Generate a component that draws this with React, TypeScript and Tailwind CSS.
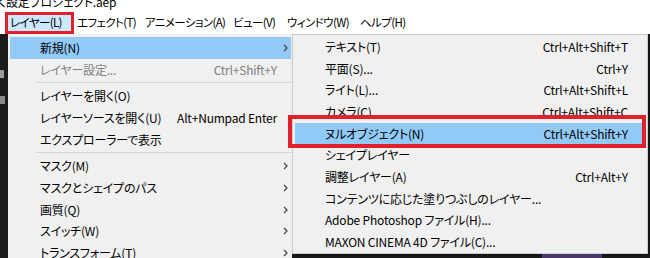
import * as React from 'react'

type Item = {
  label?: string
  shortcut?: string
  sub?: boolean
  disabled?: boolean
  active?: boolean
  sep?: boolean
}

const layerMenu: Item[] = [
  { label: '新規(N)', sub: true, active: true },
  { label: 'レイヤー設定...', shortcut: 'Ctrl+Shift+Y', disabled: true },
  { sep: true },
  { label: 'レイヤーを開く(O)' },
  { label: 'レイヤーソースを開く(U)', shortcut: 'Alt+Numpad Enter' },
  { label: 'エクスプローラーで表示' },
  { sep: true },
  { label: 'マスク(M)', sub: true },
  { label: 'マスクとシェイプのパス', sub: true },
  { label: '画質(Q)', sub: true },
  { label: 'スイッチ(W)', sub: true },
  { label: 'トランスフォーム(T)', sub: true },
]

const newMenu: Item[] = [
  { label: 'テキスト(T)', shortcut: 'Ctrl+Alt+Shift+T' },
  { label: '平面(S)...', shortcut: 'Ctrl+Y' },
  { label: 'ライト(L)...', shortcut: 'Ctrl+Alt+Shift+L' },
  { label: 'カメラ(C)...', shortcut: 'Ctrl+Alt+Shift+C' },
  { label: 'ヌルオブジェクト(N)', shortcut: 'Ctrl+Alt+Shift+Y', active: true },
  { label: 'シェイプレイヤー' },
  { label: '調整レイヤー(A)', shortcut: 'Ctrl+Alt+Y' },
  { label: 'コンテンツに応じた塗りつぶしのレイヤー...' },
  { label: 'Adobe Photoshop ファイル(H)...' },
  { label: 'MAXON CINEMA 4D ファイル(C)...' },
]

const Chevron = () => (
  <svg width="5" height="8" viewBox="0 0 5 8" className="text-[#444]">
    <path d="M1 1l3 3-3 3" stroke="currentColor" fill="none" strokeWidth="1.2" />
  </svg>
)

const App: React.FC = () => {
  return (
    <div className="relative w-[650px] h-[258px] overflow-hidden bg-white text-[12px] tracking-[-0.2px] text-black font-['Noto_Sans_CJK_JP','Noto_Sans',sans-serif] [font-feature-settings:'palt']">
      {/* title */}
      <div className="h-[12px] overflow-hidden">
        <div className="-mt-[6px] -ml-[2px] leading-[16px] whitespace-nowrap">く設定プロジェクト.aep</div>
      </div>

      {/* menu bar */}
      <div className="flex h-[22px] items-center whitespace-nowrap text-[11.5px] tracking-[-0.6px]">
        <div className="ml-[5px] flex h-[22px] w-[69px] items-center border-[3px] border-[#e0202a] bg-[#cce8ff] pl-[2px]">
          レイヤー(L)
        </div>
        <div className="ml-[3px] w-[68px]">エフェクト(T)</div>
        <div className="w-[88px]">アニメーション(A)</div>
        <div className="w-[54px]">ビュー(V)</div>
        <div className="w-[73px]">ウィンドウ(W)</div>
        <div>ヘルプ(H)</div>
      </div>

      {/* body */}
      <div className="flex h-[224px] bg-[#1c1c1c]">
        <div className="w-[8px]">
          <div className="mt-[36px] h-[8px] w-[4px] bg-[#9a9a9a]" />
          <div className="mt-[18px] h-[8px] w-[5px] bg-[#8a8a8a]" />
        </div>

        <div className="w-[284px] bg-[#f0f0f0] pt-[3px] pl-[2px] pr-[1px]">
          {layerMenu.map((it, i) =>
            it.sep ? (
              <div key={i} className="flex h-[5px] items-center">
                <div className="ml-[26px] h-px flex-1 bg-[#d5d5d5]" />
              </div>
            ) : (
              <div
                key={i}
                className={`flex h-[21.7px] items-center whitespace-nowrap ${it.active ? 'bg-[#91c9f7]' : ''} ${it.disabled ? 'text-[#7f7f7f]' : ''}`}
              >
                <span className="flex-1 pl-[30px]">{it.label}</span>
                {it.shortcut && <span>{it.shortcut}</span>}
                <span className="flex w-[14px] pl-[6px]">{it.sub && <Chevron />}</span>
              </div>
            )
          )}
        </div>

        <div className="flex w-[358px] flex-col">
          <div className="h-[220px] w-[356px] border border-[#cccccc] bg-[#f0f0f0] pt-px shadow-[2px_2px_3px_rgba(0,0,0,0.35)]">
            {newMenu.map((it, i) => (
              <div
                key={i}
                className={`mx-[2px] flex h-[21.7px] items-center whitespace-nowrap pl-[30px] pr-[17px] ${it.active ? 'bg-[#91c9f7]' : ''}`}
              >
                <span className="flex-1">{it.label}</span>
                {it.shortcut && <span>{it.shortcut}</span>}
              </div>
            ))}
          </div>
          <div className="flex flex-1">
            <div className="w-[250px]" />
            <div className="w-[60px] bg-[#4a3a6a]" />
          </div>
        </div>
      </div>

      {/* annotation box */}
      <div className="absolute left-[288px] top-[115px] h-[33px] w-[358px] border-[4px] border-[#e0202a]" />
    </div>
  )
}

export default App
